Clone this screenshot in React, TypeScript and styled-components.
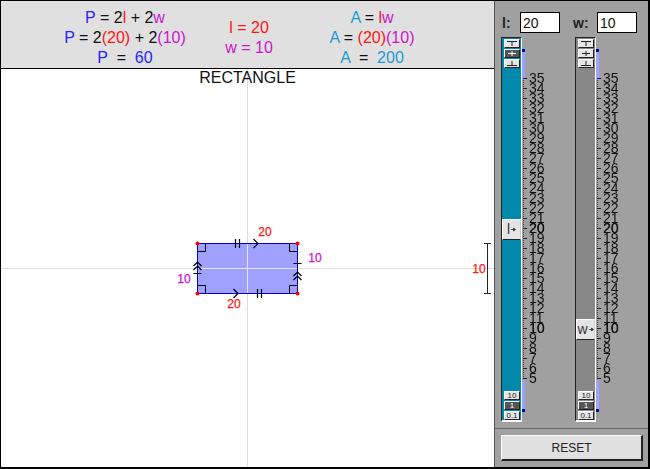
import React from "react";
import styled, { createGlobalStyle } from "styled-components";

const Global = createGlobalStyle`
  html, body { margin: 0; padding: 0; background: #fff; }
  * { box-sizing: border-box; }
`;

const RED = "#ff1414";
const MAGENTA = "#cc14cc";
const BLUE = "#2626ff";
const CYAN = "#1c9ad6";

const Frame = styled.div`
  width: 650px;
  height: 469px;
  display: flex;
  border-style: solid;
  border-color: #000;
  border-width: 1px 2px 2px 1px;
  font-family: "Liberation Sans", Arial, sans-serif;
  color: #111;
  overflow: hidden;
`;
const Main = styled.div`
  width: 493px;
  display: flex;
  flex-direction: column;
`;
const Header = styled.header`
  height: 68px;
  flex: none;
  background: #e0e0e0;
  border-bottom: 1px solid #000;
  display: grid;
  grid-template-columns: 248px 0 248px;
  justify-content: start;
  align-items: start;
  padding-top: 6px;
`;
const Formula = styled.div`
  font-size: 16px;
  line-height: 20px;
  padding-top: 1px;
  text-align: center;
  white-space: pre;
`;
const Values = styled(Formula)`
  width: 120px;
  margin-left: -60px;
  padding-top: 11px;
`;
const AreaFormula = styled(Formula)`
  padding-left: 1px;
  padding-right: 3px;
`;
const Tint = styled.span<{ $c: string }>`
  color: ${(p) => p.$c};
`;
const Canvas = styled.main`
  flex: 1;
  background: #fff;
  position: relative;
`;
const Title = styled.h1`
  position: relative;
  z-index: 1;
  margin: 0;
  font-size: 16px;
  font-weight: 400;
  line-height: 18px;
  text-align: center;
`;
const Diagram = styled.svg`
  position: absolute;
  left: 0;
  top: 0;
  width: 493px;
  height: 398px;
`;
const DiagramLabel = styled.text<{ $c: string }>`
  font-family: "Liberation Sans", Arial, sans-serif;
  font-size: 12px;
  fill: ${(p) => p.$c};
  stroke: ${(p) => p.$c};
  stroke-width: 0.25px;
  text-anchor: middle;
`;

const Side = styled.aside`
  width: 154px;
  flex: none;
  background: #a0a0a0;
  border-left: 1px solid #555;
  display: flex;
  flex-direction: column;
`;
const Controls = styled.div`
  height: 427px;
  flex: none;
  padding: 11px 0 0 6px;
  display: grid;
  grid-template-columns: 74px 74px;
  grid-template-rows: 21px 1fr;
  row-gap: 4px;
`;
const Field = styled.label<{ $w: number; $ml: number }>`
  display: flex;
  align-items: center;
  justify-content: space-between;
  width: ${(p) => p.$w}px;
  margin-left: ${(p) => p.$ml}px;
  font-size: 14px;
  font-weight: 700;
  color: #222;
`;
const Input = styled.input`
  width: 40px;
  height: 21px;
  border: 1px solid #000;
  background: #fff;
  padding: 0 2px;
  font: 14px "Liberation Sans", Arial, sans-serif;
  color: #111;
  outline: none;
`;
const Slider = styled.div`
  display: flex;
  align-items: stretch;
  height: 385px;
`;
const Track = styled.div<{ $c: string }>`
  width: 21px;
  flex: none;
  position: relative;
  background: ${(p) => p.$c};
  border-left: 1px solid #222;
  border-top: 1px solid #222;
  border-right: 1px solid #fff;
  border-bottom: 2px solid #fff;
  padding: 1px 0 0 2px;
  display: flex;
  flex-direction: column;
  justify-content: space-between;
`;
const StepGroup = styled.div`
  display: flex;
  flex-direction: column;
  gap: 1px;
`;
const Step = styled.div<{ $on?: boolean }>`
  width: 16px;
  height: 9px;
  background: ${(p) => (p.$on ? "#555" : "#e6e6e6")};
  color: ${(p) => (p.$on ? "#fff" : "#222")};
  border-style: solid;
  border-width: 1px;
  border-color: #fff #222 #222 #fff;
  font-size: 8px;
  line-height: 7px;
  text-align: center;
  display: flex;
  align-items: center;
  justify-content: center;
`;
const Thumb = styled.div<{ $top: number }>`
  position: absolute;
  left: 0;
  top: ${(p) => p.$top}px;
  width: 19px;
  height: 21px;
  background: #e4e4e4;
  border-style: solid;
  border-width: 1px;
  border-color: #fff #ccc #222 #fff;
  font-size: 14px;
  line-height: 19px;
  color: #333;
  display: flex;
  align-items: center;
  justify-content: center;
  gap: 1px;
`;
const Scale = styled.svg`
  width: 7px;
  height: 385px;
  flex: none;
`;
const Numbers = styled.div`
  padding: 36px 0 0 0;
  font-size: 14px;
  line-height: 10px;
  color: #111;
  transform: translateZ(0);
`;
const Num = styled.div<{ $strong: boolean }>`
  height: 10px;
  text-shadow: ${(p) => (p.$strong ? "0.25px 0 0 #111" : "none")};
`;
const Footer = styled.div`
  flex: 1;
  border-top: 1px solid #666;
  padding: 6px 0 0 6px;
`;
const Reset = styled.button`
  width: 142px;
  height: 26px;
  background: #e0e0e0;
  border-style: solid;
  border-width: 1px 2px 2px 1px;
  border-color: #fff #222 #222 #fff;
  font: 12px "Liberation Sans", Arial, sans-serif;
  color: #222;
  padding: 0;
`;

const Tee = ({ v, c }: { v: "top" | "mid" | "bot"; c?: string }) => (
  <svg width="10" height="5" viewBox="0 0 10 5">
    {v === "top" && <path d="M0 .5H10M5 0V5" stroke={c || "#222"} fill="none" />}
    {v === "mid" && <path d="M1 2.5H9M5 0V5" stroke={c || "#222"} fill="none" />}
    {v === "bot" && <path d="M0 4.5H10M5 0V5" stroke={c || "#222"} fill="none" />}
  </svg>
);

const Arrow = () => (
  <svg width="5" height="5" viewBox="0 0 5 5">
    <path d="M0 2.5H3M2.5 1L4.5 2.5L2.5 4Z" stroke="#333" strokeWidth="0.8" fill="#333" />
  </svg>
);

const numbers = Array.from({ length: 31 }, (_, i) => 35 - i);

const ScaleArt = () => {
  const minor: React.ReactNode[] = [];
  const major: React.ReactNode[] = [];
  for (let y = 41; y <= 341; y += 2) {
    minor.push(<rect key={y} x="1" y={y} width="1" height="1" fill="#444" />);
  }
  for (let y = 41; y <= 341; y += 10) {
    major.push(<rect key={y} x="1" y={y} width="4" height="1" fill="#222" />);
  }
  return (
    <Scale viewBox="0 0 7 385">
      <rect x="0" y="13" width="3" height="30" fill="#a0a0ff" />
      <rect x="0" y="343" width="3" height="30" fill="#a0a0ff" />
      <rect x="0" y="12" width="3" height="3" fill="#0000aa" />
      <rect x="0" y="372" width="3" height="3" fill="#0000aa" />
      {minor}
      {major}
    </Scale>
  );
};

const SliderControl = ({ color, name, top }: { color: string; name: string; top: number }) => (
  <Slider>
    <Track $c={color}>
      <StepGroup>
        <Step><Tee v="top" /></Step>
        <Step $on={name === "l"}><Tee v="mid" c={name === "l" ? "#fff" : "#222"} /></Step>
        <Step><Tee v="bot" /></Step>
      </StepGroup>
      <StepGroup>
        <Step>10</Step>
        <Step $on>1</Step>
        <Step>0.1</Step>
      </StepGroup>
      <Thumb $top={top}>{name}<Arrow /></Thumb>
    </Track>
    <ScaleArt />
    <Numbers>
      {numbers.map((n) => (
        <Num key={n} $strong={n === 10 || n === 20}>{n}</Num>
      ))}
    </Numbers>
  </Slider>
);

const Corner = ({ d }: { d: string }) => <path d={d} fill="none" stroke="#000" strokeWidth="1" />;

export default function App() {
  return (
    <Frame>
      <Global />
      <Main>
        <Header>
          <Formula>
            <Tint $c={BLUE}>P</Tint> = 2<Tint $c={RED}>l</Tint> + 2<Tint $c={MAGENTA}>w</Tint>
            {"\n"}
            <Tint $c={BLUE}>P</Tint> = 2<Tint $c={RED}>(20)</Tint> + 2<Tint $c={MAGENTA}>(10)</Tint>
            {"\n"}
            <Tint $c={BLUE}>P</Tint>{"  =  "}<Tint $c={BLUE}>60</Tint>
          </Formula>
          <Values>
            <Tint $c={RED}>l = 20</Tint>
            {"\n"}
            <Tint $c={MAGENTA}>w = 10</Tint>
          </Values>
          <AreaFormula>
            <Tint $c={CYAN}>A</Tint> = <Tint $c={RED}>l</Tint><Tint $c={MAGENTA}>w</Tint>
            {"\n"}
            <Tint $c={CYAN}>A</Tint> = <Tint $c={RED}>(20)</Tint><Tint $c={MAGENTA}>(10)</Tint>
            {"\n"}
            <Tint $c={CYAN}>A</Tint>{"  =  "}<Tint $c={CYAN}>200</Tint>
          </AreaFormula>
        </Header>
        <Canvas>
          <Title>RECTANGLE</Title>
          <Diagram viewBox="1 69 493 398">
            <path d="M247.5 69V467M1 268.5H494" stroke="#dddddd" strokeWidth="1" fill="none" />
            <rect x="197.5" y="243.5" width="100" height="50" fill="#a0a0ff" />
            <path d="M247.5 243V294M197 268.5H298" stroke="#e4e4f4" strokeWidth="1" fill="none" />
            <rect x="197.5" y="243.5" width="100" height="50" fill="none" stroke="#0000dd" strokeWidth="1" />
            <Corner d="M197.5 251.5H205.5V243.5" />
            <Corner d="M197.5 285.5H205.5V293.5" />
            <Corner d="M297.5 251.5H289.5V243.5" />
            <Corner d="M297.5 285.5H289.5V293.5" />
            <path d="M235.5 239V248M239.5 239V248M253.5 239L258 243.5L253.5 248" fill="none" stroke="#000" strokeWidth="1.2" />
            <path d="M257.5 289V298M261.5 289V298M233.5 289L238 293.5L233.5 298" fill="none" stroke="#000" strokeWidth="1.2" />
            <path d="M193.5 266L197.5 262L201.5 266M193.5 270L197.5 266L201.5 270M193.5 273.5H201.5" fill="none" stroke="#000" strokeWidth="1.2" />
            <path d="M293.5 276L297.5 272L301.5 276M293.5 280L297.5 276L301.5 280M293.5 263.5H301.5" fill="none" stroke="#000" strokeWidth="1.2" />
            <circle cx="197.5" cy="243.5" r="2" fill="#ff0000" />
            <circle cx="297.5" cy="243.5" r="2" fill="#ff0000" />
            <circle cx="197.5" cy="293.5" r="2" fill="#ff0000" />
            <circle cx="297.5" cy="293.5" r="2" fill="#ff0000" />
            <path d="M484 243.5H491M487.5 243.5V293.5M484 293.5H491" fill="none" stroke="#222" />
            <DiagramLabel $c={RED} x="265" y="236">20</DiagramLabel>
            <DiagramLabel $c={RED} x="234" y="308">20</DiagramLabel>
            <DiagramLabel $c={MAGENTA} x="184" y="283">10</DiagramLabel>
            <DiagramLabel $c={MAGENTA} x="315" y="262">10</DiagramLabel>
            <DiagramLabel $c={RED} x="479" y="273">10</DiagramLabel>
          </Diagram>
        </Canvas>
      </Main>
      <Side>
        <Controls>
          <Field $w={58} $ml={1}>l:<Input readOnly value="20" /></Field>
          <Field $w={64} $ml={-2}>w:<Input readOnly value="10" /></Field>
          <SliderControl color="#0089ab" name="l" top={181} />
          <SliderControl color="#888888" name="w" top={281} />
        </Controls>
        <Footer>
          <Reset>RESET</Reset>
        </Footer>
      </Side>
    </Frame>
  );
}
